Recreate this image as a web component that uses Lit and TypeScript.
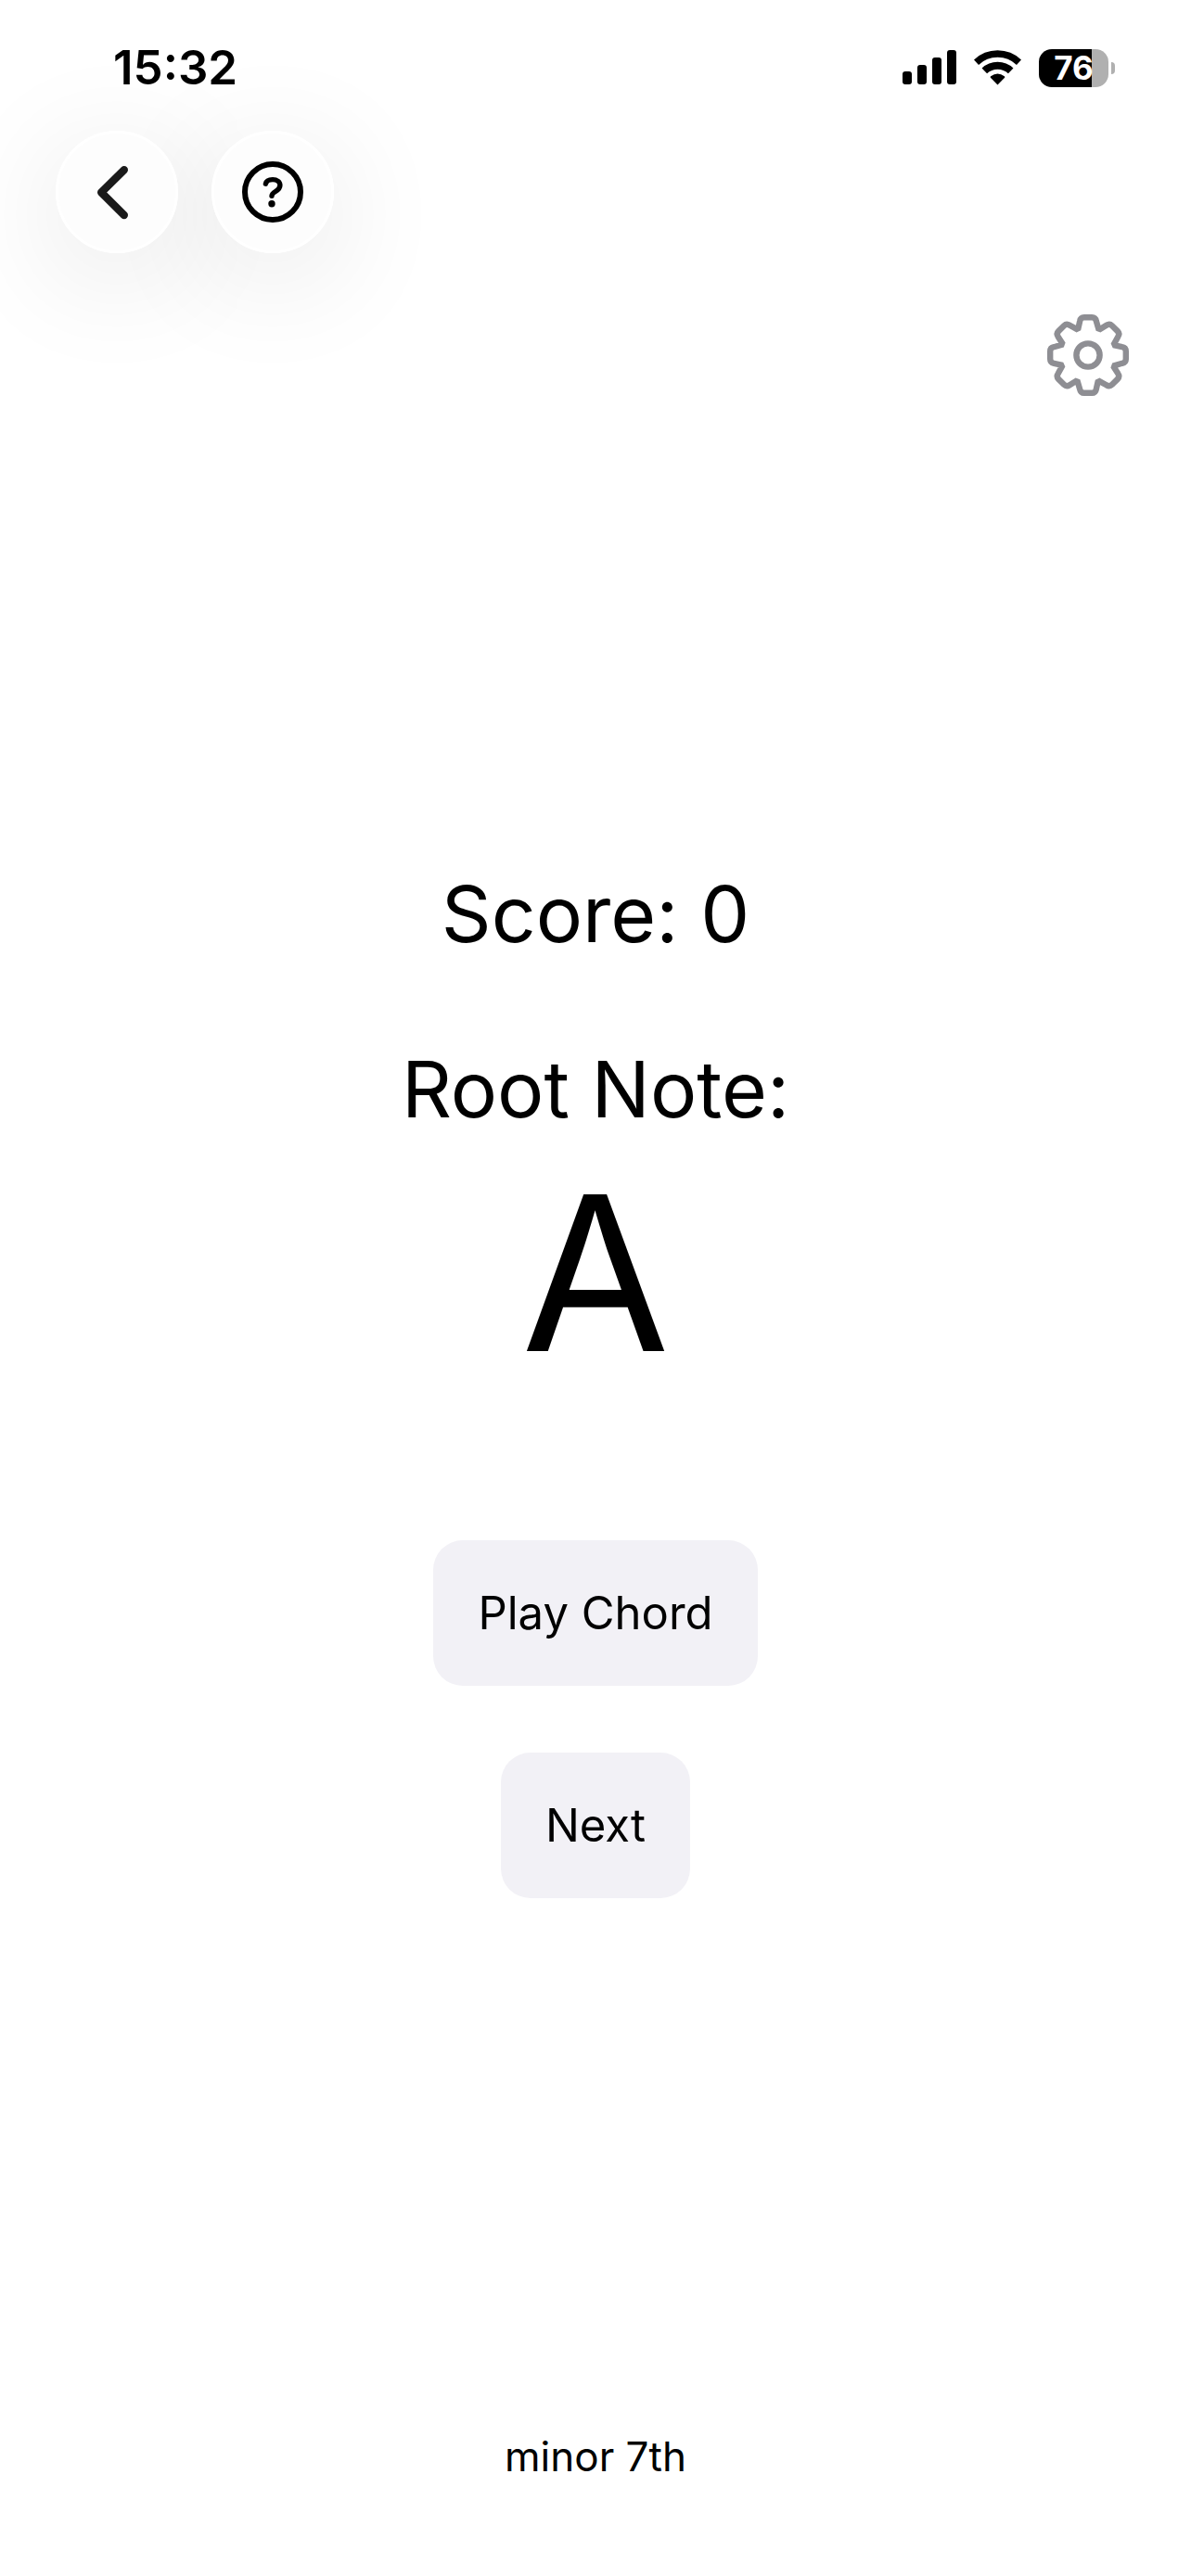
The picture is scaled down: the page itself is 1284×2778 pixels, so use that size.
import { LitElement, html, css, svg } from "lit";
import { customElement, state } from "lit/decorators.js";

/** Outline of one gear tooth, pointing up, around the origin. */
const TOOTH: number[][] = [
  [-10.9, -27.4], [-8.8, -36.8], [-8, -40.8], [-4.2, -40.8], [4.2, -40.8], [8, -40.8], [8.8, -36.8],
];

function gearPath(teeth: number): string {
  let d = "";
  for (let i = 0; i < teeth; i++) {
    const a = (i * 2 * Math.PI) / teeth;
    const p = TOOTH.map(([x, y]) =>
      `${(x * Math.cos(a) - y * Math.sin(a)).toFixed(2)} ${(x * Math.sin(a) + y * Math.cos(a)).toFixed(2)}`);
    d += `${i === 0 ? "M" : "L"}${p[0]}L${p[1]}Q${p[2]} ${p[3]}L${p[4]}Q${p[5]} ${p[6]}`;
  }
  return d + "Z";
}

const signalIcon = svg`
  <svg width="58" height="38" viewBox="0 0 58 38" aria-hidden="true">
    <rect x="0" y="23" width="10" height="14" rx="3"/>
    <rect x="16" y="16" width="10" height="21" rx="3"/>
    <rect x="32" y="8" width="10" height="29" rx="3"/>
    <rect x="48" y="0" width="10" height="37" rx="3"/>
  </svg>`;

const wifiIcon = svg`
  <svg width="51" height="38" viewBox="0.5 0 51 38" aria-hidden="true">
    <g fill="none" stroke="#000">
      <path d="M3 13.2A33.4 33.4 0 0 1 49 13.2" stroke-width="7.4"/>
      <path d="M11.8 22.4A20.6 20.6 0 0 1 40.2 22.4" stroke-width="8"/>
    </g>
    <path d="M26 37.4L18.4 29.8Q17.8 29 18.6 28.3Q26 22.8 33.4 28.3Q34.2 29 33.6 29.8Z"/>
  </svg>`;

@customElement("status-bar")
export class StatusBar extends LitElement {
  static styles = css`
    :host {
      display: flex;
      justify-content: space-between;
      align-items: center;
      height: 60px;
      padding: 43px 82px 38px 122px;
    }
    .time { font-size: 51px; line-height: 60px; font-weight: 600; }
    .indicators { display: flex; align-items: center; gap: 19px; }
    .indicators svg { display: block; }
    .battery { display: flex; align-items: center; gap: 3px; }
    .level {
      width: 75px;
      border-radius: 14px;
      background: linear-gradient(to right, #000 76%, #b0b0b0 76%);
      color: #fff;
      font-size: 35px;
      line-height: 41px;
      font-weight: 700;
      text-align: center;
    }
    .nub { width: 4px; height: 13px; border-radius: 0 4px 4px 0; background: #b0b0b0; }
  `;
  render() {
    return html`
      <span class="time">15:32</span>
      <div class="indicators">
        ${signalIcon} ${wifiIcon}
        <div class="battery"><span class="level">76</span><span class="nub"></span></div>
      </div>`;
  }
}

@customElement("app-root")
export class AppRoot extends LitElement {
  static styles = css`
    :host {
      display: flex;
      flex-direction: column;
      min-height: 100vh;
      background: #fff;
      color: #000;
      font-family: Inter, "Liberation Sans", sans-serif;
    }
    button {
      border: 0;
      margin: 0;
      padding: 0;
      font: inherit;
      color: inherit;
      background: none;
      cursor: pointer;
    }
    svg { display: block; }
    status-bar { position: relative; z-index: 1; }
    .toolbar { display: flex; gap: 36px; padding: 0 60px; }
    .round {
      display: grid;
      place-items: center;
      width: 132px;
      height: 132px;
      box-sizing: border-box;
      border: 3px solid #fff;
      border-radius: 50%;
      background: #fdfdfd;
    }
    .halo { border-radius: 50%; box-shadow: 0 24px 132px rgba(0, 0, 0, 0.11); }
    .halo .round { position: relative; z-index: 1; }
    .settings { display: flex; justify-content: flex-end; padding: 66px 67px 0; }
    main {
      flex: 1;
      display: flex;
      flex-direction: column;
      align-items: center;
      justify-content: center;
    }
    .title { margin: 0; font-size: 84px; line-height: 105px; font-weight: 400; }
    .root { margin-top: 84px; }
    .note { margin: 0; font-size: 232px; line-height: 292px; }
    .actions {
      display: flex;
      flex-direction: column;
      align-items: center;
      gap: 72px;
      margin-top: 142px;
    }
    .action {
      padding: 48px;
      border-radius: 32px;
      background: #f2f1f6;
      font-size: 49px;
      line-height: 61px;
    }
    footer {
      padding: 69px 0 102px;
      font-size: 44px;
      line-height: 54px;
      text-align: center;
    }
  `;

  @state() private score = 0;

  render() {
    return html`
      <status-bar></status-bar>
      <nav class="toolbar">
        <div class="halo">
          <button class="round" aria-label="Back">
            <svg width="66" height="66" viewBox="0 0 66 66" fill="none" stroke="#1a1a1a"
              stroke-width="8.4" stroke-linecap="round" stroke-linejoin="round">
              <path d="M40.8 9.2L16.2 33.5L40.8 58" />
            </svg>
          </button>
        </div>
        <div class="halo">
          <button class="round" aria-label="Help">
            <svg width="66" height="66" viewBox="0 0 66 66" fill="none" stroke="#000"
              stroke-linecap="round" stroke-linejoin="round">
              <circle cx="33" cy="33" r="30" stroke-width="6" />
              <path d="M25.4 24.2C26 21.4 28.9 19.6 33 19.6C37.6 19.6 40.9 22 40.9 25.8C40.9 28.8 39.2 30.5 36.4 32.2C33.4 34 32 35.2 32 37.2" stroke-width="5.4" />
              <circle cx="32" cy="45.8" r="3.7" fill="#000" stroke="none" />
            </svg>
          </button>
        </div>
      </nav>
      <div class="settings">
        <button aria-label="Settings">
          <svg width="88" height="88" viewBox="-44 -44 88 88" fill="none" stroke="#8e8e93"
            stroke-width="6.4" stroke-linejoin="bevel">
            <path d=${gearPath(8)} />
            <circle r="12.6" />
          </svg>
        </button>
      </div>
      <main>
        <p class="title">Score: ${this.score}</p>
        <h1 class="title root">Root Note:</h1>
        <p class="note">A</p>
        <div class="actions">
          <button class="action">Play Chord</button>
          <button class="action">Next</button>
        </div>
      </main>
      <footer>minor 7th</footer>`;
  }
}
